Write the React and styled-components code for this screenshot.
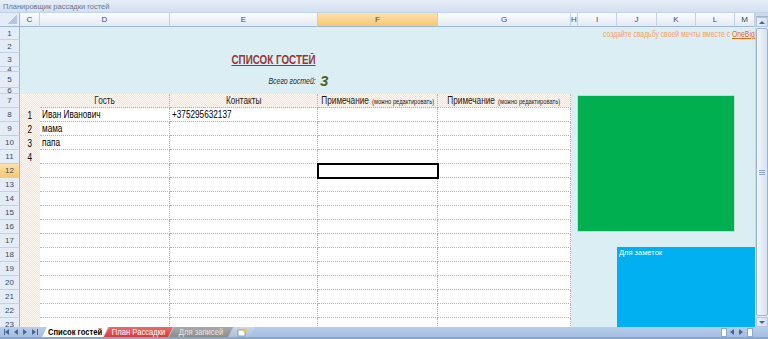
import React from 'react';
import styled, { createGlobalStyle, css } from 'styled-components';

const SANS = '"Liberation Sans", Arial, sans-serif';

const Global = createGlobalStyle`
  html, body { margin: 0; padding: 0; background: #fff; }
  body { font-family: ${SANS}; }
  #root { width: 768px; height: 339px; overflow: hidden; }
`;

const COLS = ['C', 'D', 'E', 'F', 'G', 'H', 'I', 'J', 'K', 'L', 'M'];
const COL_TEMPLATE = '20px 20px 130px 148px 120px 133px 7px 39px 40px 39px 39px 20px';
const TOP_ROWS = [
  { n: 1, h: 13 }, { n: 2, h: 13 }, { n: 3, h: 14 }, { n: 4, h: 5 },
  { n: 5, h: 16 }, { n: 6, h: 6 }, { n: 7, h: 14 },
];
const DATA_ROWS = Array.from({ length: 16 }, (_, i) => i + 8);
const ROW_TEMPLATE = ['14px', ...TOP_ROWS.map(r => r.h + 'px'), ...DATA_ROWS.map(() => '14px')].join(' ');

const guests = {
  8: { num: '1', name: 'Иван Иванович', contact: '+375295632137' },
  9: { num: '2', name: 'мама' },
  10: { num: '3', name: 'папа' },
  11: { num: '4' },
};

/* Arial Narrow look: Liberation Sans squeezed horizontally */
const Narrow = styled.span`
  display: inline-block;
  white-space: nowrap;
  transform: scaleX(0.82);
  transform-origin: ${p => p.$origin || 'left'} center;
`;

const Window = styled.div`
  width: 768px;
  height: 339px;
  display: flex;
  flex-direction: column;
  background: #fff;
  overflow: hidden;
`;

const TitleBar = styled.div`
  height: 13px;
  box-sizing: border-box;
  display: flex;
  align-items: center;
  padding-left: 3px;
  background: linear-gradient(#e6eef8, #d3e0f1);
  border-bottom: 1px solid #c2d3e9;
  font-family: ${SANS};
  font-size: 7.5px;
  color: #6d7686;
`;

const Main = styled.div`
  height: 314px;
  display: flex;
`;

const Viewport = styled.div`
  width: 755px;
  height: 314px;
  overflow: hidden;
`;

const Sheet = styled.div`
  position: relative;
  display: grid;
  grid-template-columns: ${COL_TEMPLATE};
  grid-template-rows: ${ROW_TEMPLATE};
`;

const Corner = styled.div`
  box-sizing: border-box;
  background: #e4ecf7;
  border-right: 1px solid #9eb6ce;
  border-bottom: 1px solid #9eb6ce;
  display: flex;
  align-items: flex-end;
  justify-content: flex-end;
  padding: 2px;
  &::after {
    content: '';
    width: 10px;
    height: 9px;
    background: linear-gradient(135deg, transparent 50%, #b4c6dc 50%);
  }
`;

const ColHead = styled.div`
  box-sizing: border-box;
  display: flex;
  align-items: center;
  justify-content: center;
  overflow: hidden;
  font-family: ${SANS};
  font-size: 8px;
  color: #3c4b60;
  border-right: 1px solid #c3d1e4;
  border-bottom: 1px solid #9eb6ce;
  background: ${p => (p.$active
    ? 'linear-gradient(#fbe1ab, #f5c873)'
    : 'linear-gradient(#fafcfe, #e3eaf4)')};
`;

const RowHead = styled.div`
  box-sizing: border-box;
  display: flex;
  align-items: center;
  justify-content: center;
  overflow: hidden;
  font-family: ${SANS};
  font-size: 8px;
  color: #3c4b60;
  border-right: 1px solid #9eb6ce;
  border-bottom: 1px solid #c3d1e4;
  background: ${p => (p.$active ? 'linear-gradient(#fbe1ab, #f5c873)' : '#e4ecf7')};
`;

const TONES = {
  sky: '#dbeef4',
  white: '#ffffff',
  peach: 'repeating-conic-gradient(#fbe3d3 0 25%, #fff6f0 0 50%) 0 0 / 2px 2px',
};

const Cell = styled.div`
  box-sizing: border-box;
  min-width: 0;
  overflow: hidden;
  display: flex;
  align-items: center;
  white-space: nowrap;
  padding: 0 2px;
  font-family: ${SANS};
  font-size: 10px;
  color: #000;
  background: ${p => TONES[p.$tone || 'sky']};
  justify-content: ${p => (p.$align === 'center' ? 'center' : p.$align === 'right' ? 'flex-end' : 'flex-start')};
  ${p => p.$lines && css`
    border-right: 1px dotted #b5b5b5;
    border-bottom: 1px dotted #b5b5b5;
  `}
  ${p => p.$span && css`grid-column: span ${p.$span};`}
  ${p => p.$selected && css`
    position: relative;
    z-index: 1;
    outline: 2px solid #000;
    outline-offset: -1px;
  `}
`;

const SheetTitle = styled.span`
  font-weight: bold;
  font-size: 12px;
  color: #953734;
  text-decoration: underline;
  text-underline-offset: 1px;
`;

const TotalLabel = styled.span`
  font-style: italic;
  font-size: 8.5px;
  color: #262626;
`;

const TotalValue = styled.span`
  font-style: italic;
  font-weight: bold;
  font-size: 15px;
  color: #4f6228;
`;

const Promo = styled.span`
  font-size: 8.3px;
  color: #f5a15c;
`;

const PromoCell = styled(Cell)`
  padding-left: 25px;
  overflow: hidden;
`;

const PromoLink = styled.span`
  color: #e46c0a;
  text-decoration: underline;
`;

const HeadLabel = styled.span`
  font-size: 10px;
  color: #1a1a1a;
`;

const HeadHint = styled.span`
  font-size: 7px;
  color: #1a1a1a;
  margin-left: 4px;
`;

const GreenShape = styled.div`
  position: absolute;
  left: 577px;
  top: 82px;
  width: 158px;
  height: 137px;
  box-sizing: border-box;
  background: #00b050;
  border: 1px solid #bfe3c8;
`;

const NoteShape = styled.div`
  position: absolute;
  left: 617px;
  top: 234px;
  width: 138px;
  height: 90px;
  box-sizing: border-box;
  background: #00b0f0;
  padding: 1px 2px;
  font-family: ${SANS};
  font-size: 7.5px;
  color: #fff;
`;

const VScroll = styled.div`
  width: 13px;
  display: flex;
  flex-direction: column;
  background: #e6edf7;
  border-left: 1px solid #c8d6ea;
  box-sizing: border-box;
`;

const SplitBox = styled.div`
  height: 3px;
  background: #c9d8ec;
  border-bottom: 1px solid #9db3d0;
`;

const ScrollBtn = styled.div`
  height: 10px;
  display: flex;
  align-items: center;
  justify-content: center;
  background: linear-gradient(90deg, #e9f0f9, #d3e0f1);
  border: 1px solid #b3c6df;
  box-sizing: border-box;
`;

const Thumb = styled.div`
  flex: 1;
  margin: 1px 0;
  display: flex;
  align-items: center;
  justify-content: center;
  background: linear-gradient(90deg, #f3f7fc, #d6e2f2);
  border: 1px solid #9db3d0;
  border-radius: 2px;
  box-sizing: border-box;
`;

const Grip = styled.div`
  width: 6px;
  height: 5px;
  background: repeating-linear-gradient(#8ea6c7 0 1px, transparent 1px 2px);
`;

const TabBar = styled.div`
  height: 12px;
  box-sizing: border-box;
  display: flex;
  align-items: stretch;
  background: linear-gradient(#b7cdea, #a5bee0);
  border-bottom: 2px solid #8aa5cc;
`;

const NavGroup = styled.div`
  width: 42px;
  display: flex;
  align-items: center;
  justify-content: space-around;
  padding: 0 3px;
  box-sizing: border-box;
`;

const Tabs = styled.div`
  display: flex;
  align-items: stretch;
`;

const TAB_STYLES = {
  active: css`background: #fff; color: #000; font-weight: bold;`,
  red: css`background: linear-gradient(#ee6a6a, #d93b3b); color: #fff;`,
  gray: css`background: linear-gradient(#a9a9a9, #8c8c8c); color: #e8e8e8;`,
  add: css`background: linear-gradient(#c9d7ea, #aebfd8); color: #555;`,
};

const Tab = styled.div`
  width: ${p => p.$w}px;
  display: flex;
  align-items: center;
  justify-content: center;
  margin-right: -4px;
  font-family: ${SANS};
  font-size: 9.3px;
  white-space: nowrap;
  clip-path: polygon(5px 0, 100% 0, calc(100% - 5px) 100%, 0 100%);
  ${p => TAB_STYLES[p.$kind]}
  ${p => p.$kind === 'active' && css`z-index: 1;`}
`;

const Spacer = styled.div`
  flex: 1;
`;

const HScroll = styled.div`
  display: flex;
  align-items: center;
  gap: 2px;
  padding-right: 15px;
`;

const HBox = styled.div`
  width: 4px;
  height: 7px;
  background: #fff;
  border: 1px solid #8ea6c7;
`;

function Tri({ dir, bar }) {
  const vertical = dir === 'up' || dir === 'down';
  const pts = dir === 'left' ? '5,1 5,7 1,4' : dir === 'right' ? '1,1 1,7 5,4' : dir === 'up' ? '1,5 7,5 4,2' : '1,2 7,2 4,5';
  return (
    <svg width={vertical ? 8 : 7} height={vertical ? 7 : 8} viewBox={vertical ? '0 0 8 7' : '0 0 7 8'}>
      <polygon points={pts} fill="#4a6592" />
      {bar === 'left' && <rect x="0" y="1" width="1" height="6" fill="#4a6592" />}
      {bar === 'right' && <rect x="6" y="1" width="1" height="6" fill="#4a6592" />}
    </svg>
  );
}

function AddSheetIcon() {
  return (
    <svg width="12" height="9" viewBox="0 0 12 9">
      <rect x="2" y="2" width="7" height="6" fill="#fff" stroke="#7d8fa8" strokeWidth="0.8" />
      <circle cx="9" cy="2.5" r="2" fill="#f5c242" />
    </svg>
  );
}

const HEADS = {
  D: <HeadLabel>Гость</HeadLabel>,
  E: <HeadLabel>Контакты</HeadLabel>,
  F: <><HeadLabel>Примечание</HeadLabel><HeadHint>(можно редактировать)</HeadHint></>,
  G: <><HeadLabel>Примечание</HeadLabel><HeadHint>(можно редактировать)</HeadHint></>,
};

function renderTopRow(n) {
  const cells = [];
  COLS.forEach((c, i) => {
    const key = `${n}-${c}`;
    if (n === 1 && c === 'I') {
      cells.push(
        <PromoCell key={key} $span={5}>
          <Narrow>
            <Promo>создайте свадьбу своей мечты вместе с <PromoLink>OneBigDay.ru</PromoLink></Promo>
          </Narrow>
        </PromoCell>
      );
      return;
    }
    if (n === 1 && i > COLS.indexOf('I')) return;
    if (n === 3 && c === 'E') {
      cells.push(<Cell key={key} $align="right"><Narrow $origin="right"><SheetTitle>СПИСОК ГОСТЕЙ</SheetTitle></Narrow></Cell>);
      return;
    }
    if (n === 5 && c === 'E') {
      cells.push(<Cell key={key} $align="right"><Narrow $origin="right"><TotalLabel>Всего гостей:</TotalLabel></Narrow></Cell>);
      return;
    }
    if (n === 5 && c === 'F') {
      cells.push(<Cell key={key}><TotalValue>3</TotalValue></Cell>);
      return;
    }
    if (n === 7) {
      if (c === 'C') {
        cells.push(<Cell key={key} $tone="peach" />);
        return;
      }
      if (HEADS[c]) {
        cells.push(<Cell key={key} $tone="peach" $lines $align="center"><Narrow $origin="center">{HEADS[c]}</Narrow></Cell>);
        return;
      }
    }
    cells.push(<Cell key={key} />);
  });
  return cells;
}

function renderDataRow(n) {
  const g = guests[n] || {};
  return COLS.map(c => {
    const key = `${n}-${c}`;
    if (c === 'C') return <Cell key={key} $tone="peach" $align="center">{g.num && <Narrow $origin="center">{g.num}</Narrow>}</Cell>;
    if (c === 'D') return <Cell key={key} $tone="white" $lines>{g.name && <Narrow>{g.name}</Narrow>}</Cell>;
    if (c === 'E') return <Cell key={key} $tone="white" $lines>{g.contact && <Narrow>{g.contact}</Narrow>}</Cell>;
    if (c === 'F') return <Cell key={key} $tone="white" $lines $selected={n === 12} />;
    if (c === 'G') return <Cell key={key} $tone="white" $lines />;
    return <Cell key={key} />;
  });
}

export default function App() {
  return (
    <>
      <Global />
      <Window>
        <TitleBar>Планировщик рассадки гостей</TitleBar>
        <Main>
          <Viewport>
            <Sheet>
              <Corner />
              {COLS.map(c => <ColHead key={c} $active={c === 'F'}>{c}</ColHead>)}
              {TOP_ROWS.map(r => (
                <React.Fragment key={r.n}>
                  <RowHead>{r.n}</RowHead>
                  {renderTopRow(r.n)}
                </React.Fragment>
              ))}
              {DATA_ROWS.map(n => (
                <React.Fragment key={n}>
                  <RowHead $active={n === 12}>{n}</RowHead>
                  {renderDataRow(n)}
                </React.Fragment>
              ))}
              <GreenShape />
              <NoteShape>Для заметок</NoteShape>
            </Sheet>
          </Viewport>
          <VScroll>
            <SplitBox />
            <ScrollBtn><Tri dir="up" /></ScrollBtn>
            <Thumb><Grip /></Thumb>
            <ScrollBtn><Tri dir="down" /></ScrollBtn>
          </VScroll>
        </Main>
        <TabBar>
          <NavGroup>
            <Tri dir="left" bar="left" />
            <Tri dir="left" />
            <Tri dir="right" />
            <Tri dir="right" bar="right" />
          </NavGroup>
          <Tabs>
            <Tab $kind="active" $w={66}><Narrow $origin="center">Список гостей</Narrow></Tab>
            <Tab $kind="red" $w={69}><Narrow $origin="center">План Рассадки</Narrow></Tab>
            <Tab $kind="gray" $w={64}><Narrow $origin="center">Для записей</Narrow></Tab>
            <Tab $kind="add" $w={26}><AddSheetIcon /></Tab>
          </Tabs>
          <Spacer />
          <HScroll>
            <HBox />
            <Tri dir="left" />
            <Tri dir="right" />
            <HBox />
          </HScroll>
        </TabBar>
      </Window>
    </>
  );
}
